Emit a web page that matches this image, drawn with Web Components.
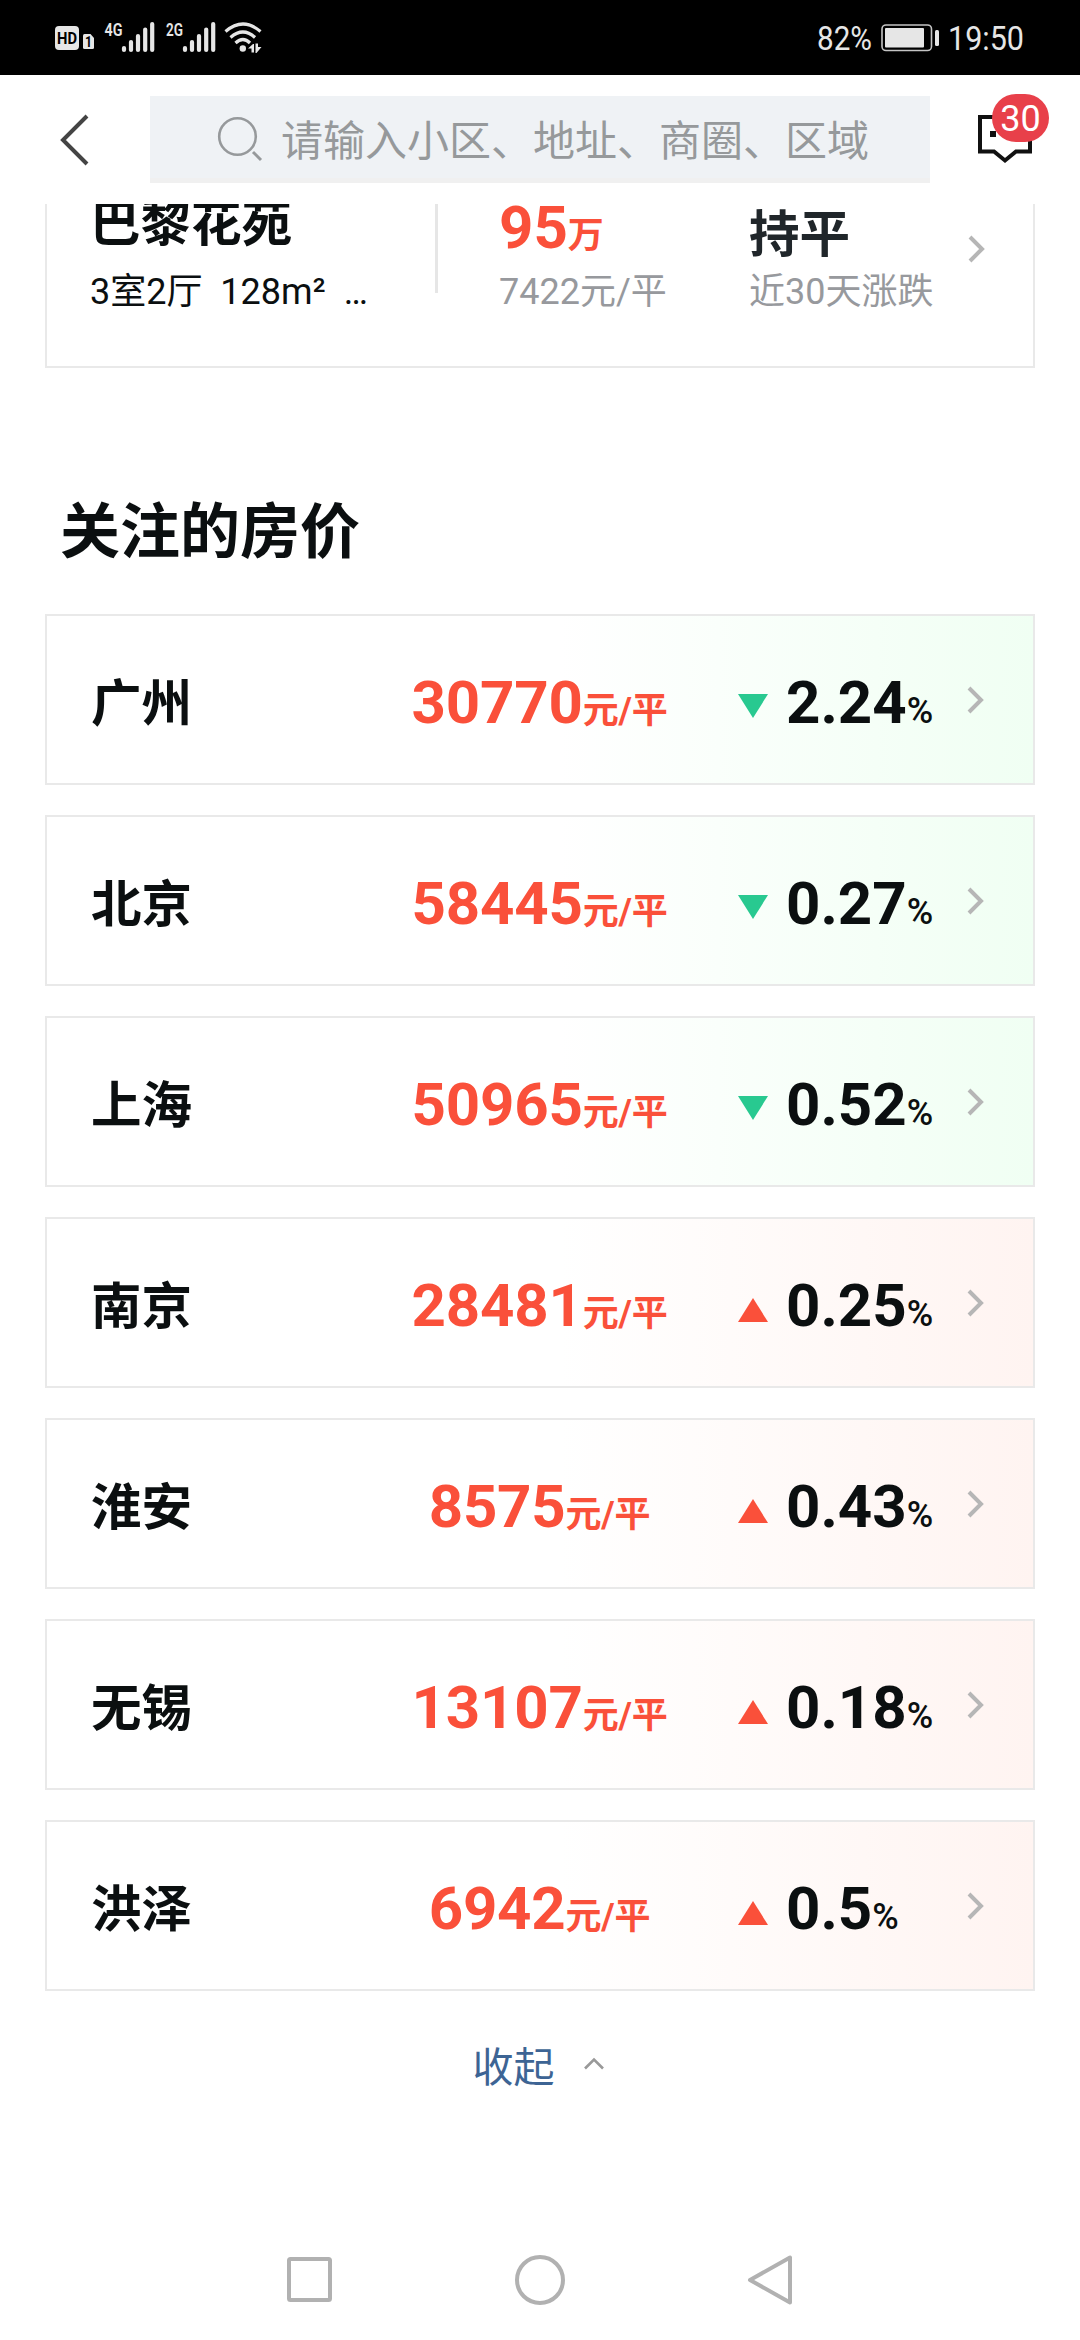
<!DOCTYPE html>
<html lang="zh-CN">
<head>
<meta charset="utf-8">
<meta name="viewport" content="width=1080">
<title>房价</title>
<style>
  :root {
    --up: #fa503a;
    --down: #28c990;
    --text: #0b0f10;
    --muted: #97999d;
    --line: #e9e9e9;
  }
  body {
    margin: 0;
    background: #fff;
    color: var(--text);
    font-family: Roboto, "Noto Sans CJK SC", sans-serif;
  }
</style>
</head>
<body>
<price-app></price-app>

<script>
class StatusBar extends HTMLElement {
  constructor() {
    super();
    this.shadowDOM = this.attachShadow({ mode: "open" });
  }

  connectedCallback() {
    this.render();
  }

  render() {
    this.shadowDOM.innerHTML = `
      <style>
        :host {
          display: flex;
          justify-content: space-between;
          height: 75px;
          background: #000;
        }
        svg { display: block; fill: #e6e6e6; font-family: Roboto, sans-serif; }
      </style>
      <svg width="300" height="75">
        <rect x="55" y="26" width="24" height="24" rx="4"/>
        <text x="57" y="44" font-size="17" font-weight="700" fill="#000" textLength="20" lengthAdjust="spacingAndGlyphs">HD</text>
        <path d="M84.500 34h6l3.500 4v9.500q0 1.500-1.500 1.500h-8q-1.500 0-1.500-1.500v-12q0-1.500 1.500-1.500z"/>
        <text x="85" y="47" font-size="14" font-weight="700" fill="#000" textLength="7" lengthAdjust="spacingAndGlyphs">1</text>
        <text x="104.500" y="35.500" font-size="19" font-weight="600" textLength="18" lengthAdjust="spacingAndGlyphs">4G</text>
        <path stroke="#e6e6e6" stroke-width="4.200" stroke-linecap="round" d="M124 48v2M131 42v8M138 36v14M145.200 29.500v20.500M152.200 24v26"/>
        <text x="166" y="35.500" font-size="19" font-weight="600" textLength="17" lengthAdjust="spacingAndGlyphs">2G</text>
        <path stroke="#e6e6e6" stroke-width="4.200" stroke-linecap="round" d="M185 48v2M192 42v8M199 36v14M206.200 29.500v20.500M213.200 24v26"/>
        <path fill="none" stroke="#e6e6e6" stroke-width="3.200" d="M225.500 31.500Q243 16.500 260.500 31.500M230.500 37.500Q243 26.500 255 37.500M235.500 43Q243 36 250 43"/>
        <circle cx="242.800" cy="48.500" r="3.200"/>
        <path d="M248 48.500l5-4.500h1v8.500h-2.500v-4zM255.500 43.500h2.500v3.500h3.500l-5 6h-1z"/>
      </svg>
      <svg width="280" height="75">
        <text x="17" y="50" font-size="34" textLength="55" lengthAdjust="spacingAndGlyphs">82%</text>
        <rect x="82" y="25" width="49.500" height="25.500" rx="4" fill="none" stroke="#c4c4c4" stroke-width="1.600"/>
        <rect x="85" y="28" width="39" height="19.500" rx="1"/>
        <rect x="135" y="30" width="4" height="16" rx="1.500"/>
        <text x="148" y="50" font-size="34" textLength="76" lengthAdjust="spacingAndGlyphs">19:50</text>
      </svg>
    `;
  }
}

class SearchHeader extends HTMLElement {
  constructor() {
    super();
    this.shadowDOM = this.attachShadow({ mode: "open" });
  }

  connectedCallback() {
    this.render();
  }

  render() {
    this.shadowDOM.innerHTML = `
      <style>
        :host {
          display: flex;
          align-items: flex-start;
          height: 108px;
          padding-top: 21px;
          background: #fff;
        }
        svg { display: block; fill: none; }
        .back { width: 150px; }
        .search {
          display: flex;
          box-sizing: border-box;
          width: 780px;
          height: 87px;
          padding-left: 65px;
          background: #eff2f5;
          border-bottom: 5px solid #f0f0f0;
          color: #96999b;
          font-size: 42px;
          line-height: 92px;
          white-space: nowrap;
        }
        .search svg { width: 66px; height: 82px; }
        .message { position: relative; width: 150px; }
        .badge {
          position: absolute;
          left: 62px;
          top: -2px;
          width: 57px;
          height: 48px;
          border-radius: 24px;
          background: #e8404a;
          color: #fff;
          font-size: 36px;
          line-height: 51px;
          text-align: center;
        }
      </style>
      <svg class="back" height="87">
        <path d="M87 20L63 44l24 24" stroke="#444" stroke-width="4"/>
      </svg>
      <div class="search">
        <svg>
          <circle cx="22.500" cy="40.500" r="18.300" stroke="#96999b" stroke-width="2.600"/>
          <path d="M38 56l8 8" stroke="#96999b" stroke-width="3"/>
        </svg>
        <slot></slot>
      </div>
      <div class="message">
        <svg width="150" height="87">
          <path d="M50 21h50v34.500H86L75 64.500l-11-9H50z" stroke="#111" stroke-width="4"/>
          <rect x="60" y="35" width="6" height="6" fill="#111"/>
        </svg>
        <span class="badge">${this.getAttribute("unread")}</span>
      </div>
    `;
  }
}

class ChevronIcon extends HTMLElement {
  constructor() {
    super();
    this.shadowDOM = this.attachShadow({ mode: "open" });
  }

  connectedCallback() {
    this.render();
  }

  render() {
    this.shadowDOM.innerHTML = `
      <style>
        :host { display: block; width: 18px; height: 28px; }
        svg { display: block; }
      </style>
      <svg width="18" height="28">
        <path d="M2 2l12 12L2 26" fill="none" stroke="#b6b6b6" stroke-width="4"/>
      </svg>
    `;
  }
}

class HomeCard extends HTMLElement {
  constructor() {
    super();
    this.shadowDOM = this.attachShadow({ mode: "open" });
  }

  connectedCallback() {
    this.render();
  }

  render() {
    this.shadowDOM.innerHTML = `
      <style>
        :host {
          display: flex;
          box-sizing: border-box;
          height: 164px;
          margin: 0 45px;
          border: 2px solid var(--line);
          border-top: 0;
          padding: 0 0 54px 43px;
          align-items: flex-end;
          /* the top of the card is scrolled under the header */
          overflow: hidden;
          white-space: nowrap;
        }
        .col { display: flex; flex-direction: column; flex: none; box-sizing: border-box; }
        .name { width: 345px; gap: 23px; }
        .price { width: 311px; gap: 14px; padding-left: 61px; }
        .trend { width: 219px; gap: 12px; color: #20262a; }
        .divider { width: 3px; height: 89px; background: #e6e6e6; align-self: flex-start; }
        .big { font-size: 50.500px; line-height: 50px; font-weight: 700; }
        .price .big { font-size: 60px; line-height: 60px; color: var(--up); }
        .big small { font-size: 36px; line-height: 1; }
        .sub { font-size: 36px; line-height: 40px; font-weight: 400; white-space: pre; }
        .grey { color: var(--muted); }
        chevron-icon { align-self: flex-start; margin-top: 31px; }
      </style>
      <div class="col name">
        <div class="big">巴黎花苑</div>
        <div class="sub">3室2厅  128m²  …</div>
      </div>
      <div class="divider"></div>
      <div class="col price">
        <div class="big">95<small>万</small></div>
        <div class="sub grey">7422元/平</div>
      </div>
      <div class="col trend">
        <div class="big">持平</div>
        <div class="sub grey">近30天涨跌</div>
      </div>
      <chevron-icon></chevron-icon>
    `;
  }
}

class CityRow extends HTMLElement {
  constructor() {
    super();
    this.shadowDOM = this.attachShadow({ mode: "open" });
  }

  connectedCallback() {
    this.render();
  }

  render() {
    const up = this.getAttribute("trend") === "up";
    const tint = up ? "#fff4f1" : "#f0fff3";
    const points = up ? "0,24 15,0 30,24" : "0,0 30,0 15,24";

    this.shadowDOM.innerHTML = `
      <style>
        :host {
          display: grid;
          grid-template-columns: 250px 397px 229px 18px;
          align-items: center;
          box-sizing: border-box;
          height: 171px;
          padding-left: 44px;
          border: 2px solid var(--line);
          background: linear-gradient(90deg, #fff 52%, ${tint});
          font-weight: 700;
          white-space: nowrap;
        }
        .name { font-size: 50.500px; line-height: 70px; padding-top: 9px; }
        .price, .change { font-size: 60px; line-height: 70px; padding-top: 7px; }
        .price { color: var(--up); text-align: center; letter-spacing: -0.2px; }
        small { font-size: 36px; line-height: 1; }
        .change { display: flex; align-items: center; gap: 18px; }
        .change small { font-weight: 500; }
        .change svg { display: block; margin-top: ${up ? 8 : 6}px; }
      </style>
      <div class="name"><slot></slot></div>
      <div class="price">${this.getAttribute("price")}<small>元/平</small></div>
      <div class="change">
        <svg width="30" height="24"><polygon points="${points}" fill="var(--${up ? "up" : "down"})"/></svg>
        <div>${this.getAttribute("change")}<small>%</small></div>
      </div>
      <chevron-icon></chevron-icon>
    `;
  }
}

class CollapseLink extends HTMLElement {
  constructor() {
    super();
    this.shadowDOM = this.attachShadow({ mode: "open" });
  }

  connectedCallback() {
    this.render();
  }

  render() {
    this.shadowDOM.innerHTML = `
      <style>
        :host {
          display: flex;
          justify-content: center;
          align-items: center;
          gap: 29px;
          height: 60px;
          margin-top: 47px;
          padding-right: 4px;
          color: #3d6494;
          font-size: 41px;
          line-height: 60px;
          cursor: pointer;
        }
        svg { display: block; margin-bottom: 10px; }
      </style>
      <slot></slot>
      <svg width="20" height="13"><path d="M1 11.500L10 2.500l9 9" fill="none" stroke="#999" stroke-width="2.600"/></svg>
    `;
  }
}

class NavBar extends HTMLElement {
  constructor() {
    super();
    this.shadowDOM = this.attachShadow({ mode: "open" });
  }

  connectedCallback() {
    this.render();
  }

  render() {
    this.shadowDOM.innerHTML = `
      <style>
        :host {
          display: flex;
          justify-content: center;
          align-items: center;
          gap: 178px;
          height: 120px;
        }
        svg { display: block; fill: none; stroke: #b1b1b1; stroke-width: 4; stroke-linejoin: round; }
      </style>
      <svg width="52" height="52"><rect x="5" y="5" width="41" height="41" rx="1.500"/></svg>
      <svg width="52" height="52"><circle cx="26" cy="26" r="23"/></svg>
      <svg width="52" height="52"><path d="M46 3.500v45L6 26z"/></svg>
    `;
  }
}

class PriceApp extends HTMLElement {
  constructor() {
    super();
    this.shadowDOM = this.attachShadow({ mode: "open" });
  }

  connectedCallback() {
    this.render();
  }

  render() {
    const cities = [
      ["广州", "30770", "down", "2.24"],
      ["北京", "58445", "down", "0.27"],
      ["上海", "50965", "down", "0.52"],
      ["南京", "28481", "up", "0.25"],
      ["淮安", "8575", "up", "0.43"],
      ["无锡", "13107", "up", "0.18"],
      ["洪泽", "6942", "up", "0.5"],
    ];

    this.shadowDOM.innerHTML = `
      <style>
        :host {
          display: flex;
          flex-direction: column;
          width: 1080px;
          height: 2340px;
          overflow: hidden;
        }
        main { flex: 1; }
        h2 {
          margin: 125px 0 41px 60px;
          font-size: 60px;
          line-height: 80px;
          font-weight: 700;
        }
        .list { display: flex; flex-direction: column; gap: 30px; margin: 0 45px; }
      </style>
      <status-bar></status-bar>
      <search-header unread="30">请输入小区、地址、商圈、区域</search-header>
      <main>
        <home-card></home-card>
        <h2>关注的房价</h2>
        <div class="list">
          ${cities.map(([name, price, trend, change]) => `
            <city-row price="${price}" trend="${trend}" change="${change}">${name}</city-row>
          `).join("")}
        </div>
        <collapse-link>收起</collapse-link>
      </main>
      <nav-bar></nav-bar>
    `;
  }
}

customElements.define("status-bar", StatusBar);
customElements.define("search-header", SearchHeader);
customElements.define("chevron-icon", ChevronIcon);
customElements.define("home-card", HomeCard);
customElements.define("city-row", CityRow);
customElements.define("collapse-link", CollapseLink);
customElements.define("nav-bar", NavBar);
customElements.define("price-app", PriceApp);
</script>
</body>
</html>
